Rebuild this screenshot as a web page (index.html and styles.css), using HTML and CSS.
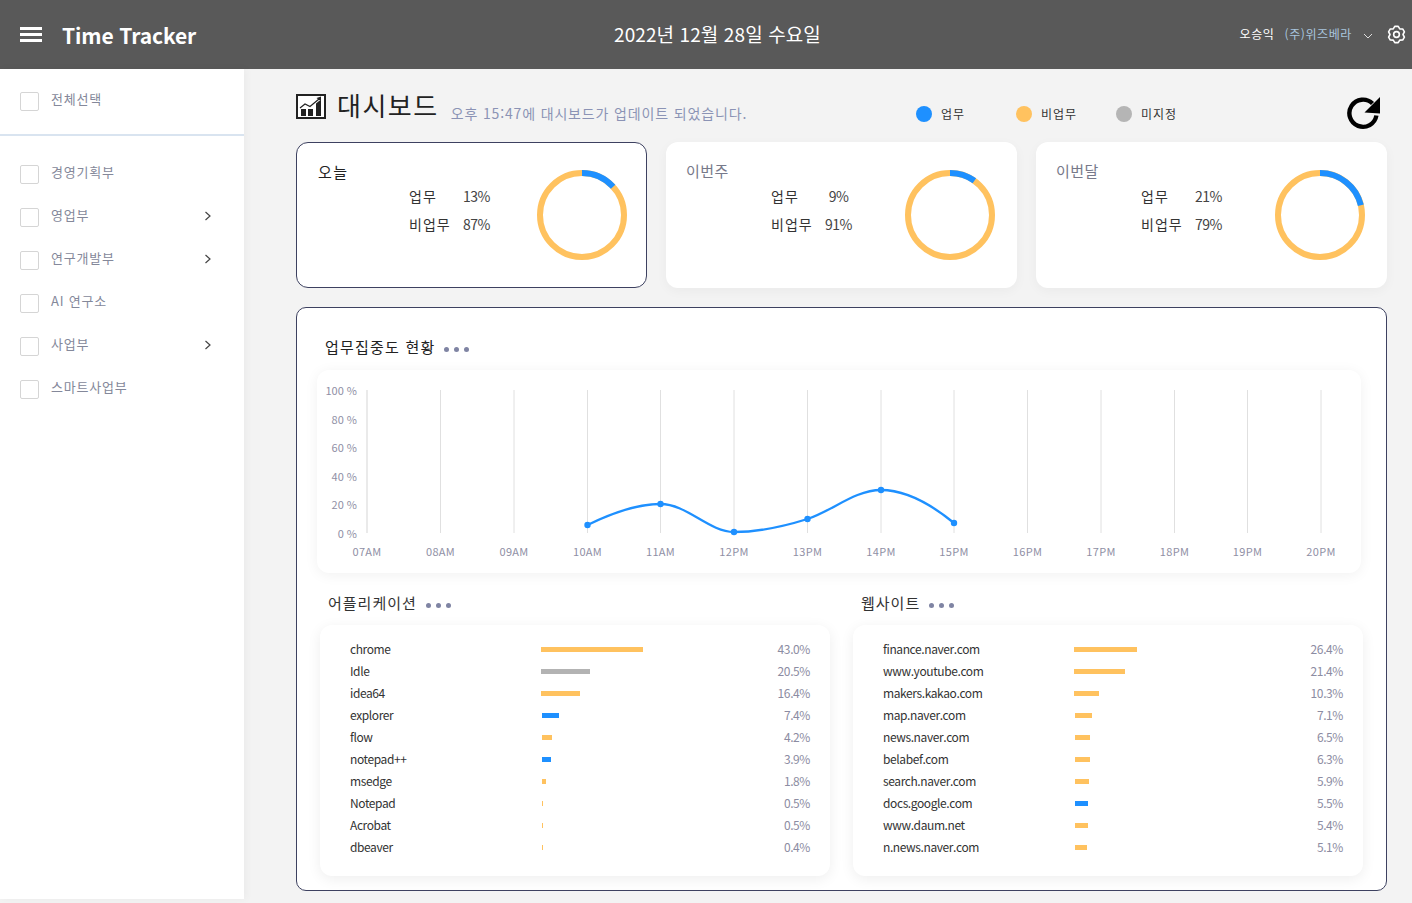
FILE: index.html
```html
<!DOCTYPE html>
<html lang="ko">

<head>
  <meta charset="utf-8">
  <title>Time Tracker</title>
  <link rel="stylesheet" href="styles.css">
</head>

<body>

  <header class="topbar">
    <div class="brand">
      <div class="burger"><span></span><span></span><span></span></div>
      <span class="brand-name">Time Tracker</span>
    </div>
    <div class="today-date">2022년 12월 28일 수요일</div>
    <div class="user">
      <span class="user-name">오승익</span>
      <span class="user-company">(주)위즈베라</span>
      <svg class="user-arrow" width="10" height="6" viewBox="0 0 10 6"><polyline points="1,1 5,5 9,1" /></svg>
      <svg class="gear" width="19" height="19" viewBox="0 0 24 24">
        <circle cx="12" cy="12" r="3.6" />
        <path d="M9.82 1.73L14.18 1.73L16.1 4.9L19.8 4.97L21.99 8.76L20.2 12L21.99 15.24L19.8 19.03L16.1 19.1L14.18 22.27L9.82 22.27L7.9 19.1L4.2 19.03L2.01 15.24L3.8 12L2.01 8.76L4.2 4.97L7.9 4.9Z" />
      </svg>
    </div>
  </header>

  <div class="layout">
    <aside class="sidebar">
      <div class="side-all">
        <span class="check"></span>
        <span class="side-label">전체선택</span>
      </div>
      <ul class="side-list">
        <li class="side-item"><span class="check"></span><span class="side-label">경영기획부</span></li>
        <li class="side-item"><span class="check"></span><span class="side-label">영업부</span>
          <svg class="side-arrow" width="8" height="10" viewBox="0 0 8 10"><polyline points="1.5,1 6,5 1.5,9" /></svg></li>
        <li class="side-item"><span class="check"></span><span class="side-label">연구개발부</span>
          <svg class="side-arrow" width="8" height="10" viewBox="0 0 8 10"><polyline points="1.5,1 6,5 1.5,9" /></svg></li>
        <li class="side-item"><span class="check"></span><span class="side-label">AI 연구소</span></li>
        <li class="side-item"><span class="check"></span><span class="side-label">사업부</span>
          <svg class="side-arrow" width="8" height="10" viewBox="0 0 8 10"><polyline points="1.5,1 6,5 1.5,9" /></svg></li>
        <li class="side-item"><span class="check"></span><span class="side-label">스마트사업부</span></li>
      </ul>
    </aside>

    <main class="main">
      <div class="title-row">
        <div class="title-group">
          <svg class="title-icon" width="30" height="25" viewBox="0 0 30 25">
            <rect x="1" y="1" width="28" height="23" fill="#fff" stroke="#222" stroke-width="2" />
            <rect x="5" y="15" width="5" height="7" fill="#222" />
            <rect x="12" y="15" width="5" height="7" fill="#222" />
            <rect x="20" y="7" width="5" height="15" fill="#222" />
            <polyline points="4,14 9,10 14,12.5 23,5" fill="none" stroke="#fff" stroke-width="3" />
            <polyline points="4,14 9,10 14,12.5 23,5" fill="none" stroke="#222" stroke-width="1.2" />
            <polygon points="25,2.5 25,7.5 20.5,4" fill="#222" />
          </svg>
          <h1 class="page-title">대시보드</h1>
          <span class="updated">오후 15:47에 대시보드가 업데이트 되었습니다.</span>
        </div>
        <div class="legend-item"><span class="dot dot-work"></span>업무</div>
        <div class="legend-item"><span class="dot dot-off"></span>비업무</div>
        <div class="legend-item"><span class="dot dot-none"></span>미지정</div>
        <svg class="refresh" width="34" height="33" viewBox="0 0 34 33">
          <path d="M25.5 6.5A13.6 13.6 0 1 0 29.4 18.5" fill="none" stroke="#000" stroke-width="4.4" />
          <polygon points="33,0 33,16.5 17.5,15.5" fill="#000" />
        </svg>
      </div>

      <section class="cards">
        <div class="card card-active">
          <div class="card-title">오늘</div>
          <div class="stats">
            <span>업무</span><span>13%</span>
            <span>비업무</span><span>87%</span>
          </div>
          <svg class="donut" width="90" height="90" viewBox="0 0 90 90">
            <circle class="ring" cx="45" cy="45" r="42" />
            <circle class="ring-work" cx="45" cy="45" r="42" stroke-dasharray="35 264" transform="rotate(-90 45 45)" />
          </svg>
        </div>
        <div class="card">
          <div class="card-title">이번주</div>
          <div class="stats">
            <span>업무</span><span>9%</span>
            <span>비업무</span><span>91%</span>
          </div>
          <svg class="donut" width="90" height="90" viewBox="0 0 90 90">
            <circle class="ring" cx="45" cy="45" r="42" />
            <circle class="ring-work" cx="45" cy="45" r="42" stroke-dasharray="26 264" transform="rotate(-90 45 45)" />
          </svg>
        </div>
        <div class="card">
          <div class="card-title">이번달</div>
          <div class="stats">
            <span>업무</span><span>21%</span>
            <span>비업무</span><span>79%</span>
          </div>
          <svg class="donut" width="90" height="90" viewBox="0 0 90 90">
            <circle class="ring" cx="45" cy="45" r="42" />
            <circle class="ring-work" cx="45" cy="45" r="42" stroke-dasharray="56 264" transform="rotate(-90 45 45)" />
          </svg>
        </div>
      </section>

      <section class="panel">
        <h2 class="panel-title">업무집중도 현황<span class="more"><i></i><i></i><i></i></span></h2>
        <div class="chart-card">
          <svg width="1044" height="203" viewBox="0 0 1044 203">
            <g class="grid">
              <line class="grid-first" x1="50" y1="20" x2="50" y2="163" />
              <line x1="123.5" y1="20" x2="123.5" y2="163" />
              <line x1="197" y1="20" x2="197" y2="163" />
              <line x1="270.5" y1="20" x2="270.5" y2="163" />
              <line x1="343.5" y1="20" x2="343.5" y2="163" />
              <line x1="417" y1="20" x2="417" y2="163" />
              <line x1="490.5" y1="20" x2="490.5" y2="163" />
              <line x1="564" y1="20" x2="564" y2="163" />
              <line x1="637" y1="20" x2="637" y2="163" />
              <line x1="710.5" y1="20" x2="710.5" y2="163" />
              <line x1="784" y1="20" x2="784" y2="163" />
              <line x1="857.5" y1="20" x2="857.5" y2="163" />
              <line x1="930.5" y1="20" x2="930.5" y2="163" />
              <line x1="1004" y1="20" x2="1004" y2="163" />
            </g>
            <g class="axis-y">
              <text x="40" y="25">100 %</text>
              <text x="40" y="54">80 %</text>
              <text x="40" y="82">60 %</text>
              <text x="40" y="111">40 %</text>
              <text x="40" y="139">20 %</text>
              <text x="40" y="168">0 %</text>
            </g>
            <g class="axis-x">
              <text x="50" y="186">07AM</text>
              <text x="123.5" y="186">08AM</text>
              <text x="197" y="186">09AM</text>
              <text x="270.5" y="186">10AM</text>
              <text x="343.5" y="186">11AM</text>
              <text x="417" y="186">12PM</text>
              <text x="490.5" y="186">13PM</text>
              <text x="564" y="186">14PM</text>
              <text x="637" y="186">15PM</text>
              <text x="710.5" y="186">16PM</text>
              <text x="784" y="186">17PM</text>
              <text x="857.5" y="186">18PM</text>
              <text x="930.5" y="186">19PM</text>
              <text x="1004" y="186">20PM</text>
            </g>
            <path class="line" d="M270.5 155C295 143 320 134 343.5 134C370 134 392 162 417 162C442 162 465 157 490.5 149C515 141 538 120 564 120C590 120 615 135 637 153" />
            <g class="points">
              <circle cx="270.5" cy="155" r="3.2" />
              <circle cx="343.5" cy="134" r="3.2" />
              <circle cx="417" cy="162" r="3.2" />
              <circle cx="490.5" cy="149" r="3.2" />
              <circle cx="564" cy="120" r="3.2" />
              <circle cx="637" cy="153" r="3.2" />
            </g>
          </svg>
        </div>

        <div class="usage">
          <div class="usage-col">
            <h2 class="usage-title">어플리케이션<span class="more"><i></i><i></i><i></i></span></h2>
            <div class="usage-card">
              <div class="row"><span class="row-name">chrome</span><span><span class="bar bar-off" style="width:102px"></span></span><span class="row-pct">43.0%</span></div>
              <div class="row"><span class="row-name">Idle</span><span><span class="bar bar-none" style="width:49px"></span></span><span class="row-pct">20.5%</span></div>
              <div class="row"><span class="row-name">idea64</span><span><span class="bar bar-off" style="width:39px"></span></span><span class="row-pct">16.4%</span></div>
              <div class="row"><span class="row-name">explorer</span><span><span class="bar bar-work bar-small" style="width:17px"></span></span><span class="row-pct">7.4%</span></div>
              <div class="row"><span class="row-name">flow</span><span><span class="bar bar-off bar-small" style="width:10px"></span></span><span class="row-pct">4.2%</span></div>
              <div class="row"><span class="row-name">notepad++</span><span><span class="bar bar-work bar-small" style="width:9px"></span></span><span class="row-pct">3.9%</span></div>
              <div class="row"><span class="row-name">msedge</span><span><span class="bar bar-off bar-small" style="width:4px"></span></span><span class="row-pct">1.8%</span></div>
              <div class="row"><span class="row-name">Notepad</span><span><span class="bar bar-off bar-small" style="width:1px"></span></span><span class="row-pct">0.5%</span></div>
              <div class="row"><span class="row-name">Acrobat</span><span><span class="bar bar-off bar-small" style="width:1px"></span></span><span class="row-pct">0.5%</span></div>
              <div class="row"><span class="row-name">dbeaver</span><span><span class="bar bar-off bar-small" style="width:1px"></span></span><span class="row-pct">0.4%</span></div>
            </div>
          </div>
          <div class="usage-col">
            <h2 class="usage-title">웹사이트<span class="more"><i></i><i></i><i></i></span></h2>
            <div class="usage-card">
              <div class="row"><span class="row-name">finance.naver.com</span><span><span class="bar bar-off" style="width:63px"></span></span><span class="row-pct">26.4%</span></div>
              <div class="row"><span class="row-name">www.youtube.com</span><span><span class="bar bar-off" style="width:51px"></span></span><span class="row-pct">21.4%</span></div>
              <div class="row"><span class="row-name">makers.kakao.com</span><span><span class="bar bar-off" style="width:25px"></span></span><span class="row-pct">10.3%</span></div>
              <div class="row"><span class="row-name">map.naver.com</span><span><span class="bar bar-off bar-small" style="width:17px"></span></span><span class="row-pct">7.1%</span></div>
              <div class="row"><span class="row-name">news.naver.com</span><span><span class="bar bar-off bar-small" style="width:15px"></span></span><span class="row-pct">6.5%</span></div>
              <div class="row"><span class="row-name">belabef.com</span><span><span class="bar bar-off bar-small" style="width:15px"></span></span><span class="row-pct">6.3%</span></div>
              <div class="row"><span class="row-name">search.naver.com</span><span><span class="bar bar-off bar-small" style="width:14px"></span></span><span class="row-pct">5.9%</span></div>
              <div class="row"><span class="row-name">docs.google.com</span><span><span class="bar bar-work bar-small" style="width:13px"></span></span><span class="row-pct">5.5%</span></div>
              <div class="row"><span class="row-name">www.daum.net</span><span><span class="bar bar-off bar-small" style="width:13px"></span></span><span class="row-pct">5.4%</span></div>
              <div class="row"><span class="row-name">n.news.naver.com</span><span><span class="bar bar-off bar-small" style="width:12px"></span></span><span class="row-pct">5.1%</span></div>
            </div>
          </div>
        </div>
      </section>
    </main>
  </div>

</body>

</html>
```

FILE: styles.css
```css
* {
  box-sizing: border-box;
}

html,
body {
  height: 903px;
  overflow: hidden;
}

body {
  margin: 0;
  background-color: #f3f3f3;
  color: #333;
  font-family: "Noto Sans CJK KR", "Noto Sans", sans-serif;
  font-size: 13px;
}

h1,
h2 {
  margin: 0;
  font-weight: 400;
}

/* top bar */
.topbar {
  display: flex;
  align-items: center;
  height: 69px;
  padding-left: 20px;
  background-color: #595959;
  color: #fff;
}

.brand {
  display: flex;
  align-items: center;
  width: 594px;
}

.burger {
  display: flex;
  flex-direction: column;
  gap: 3px;
  width: 22px;
  margin-right: 20px;
}

.burger span {
  height: 3px;
  background-color: #fff;
}

.brand-name {
  font-size: 21px;
  font-weight: 700;
  line-height: 30px;
  letter-spacing: -0.1px;
}

.today-date {
  font-size: 19px;
  line-height: 28px;
  margin-top: -2px;
  letter-spacing: 0.1px;
}

.user {
  display: flex;
  align-items: center;
  margin-left: auto;
  padding-right: 6px;
}

.user-name {
  font-size: 12px;
  letter-spacing: 0.6px;
  margin-right: 10px;
  margin-top: -3px;
}

.user-company {
  font-size: 12px;
  letter-spacing: 0.6px;
  color: #a9c6de;
  margin-right: 11px;
  margin-top: -3px;
}

.user-arrow {
  margin-right: 14px;
  margin-top: 2px;
}

.user-arrow polyline {
  fill: none;
  stroke: #ddd;
  stroke-width: 1;
}

.gear {
  fill: none;
  stroke: #fff;
  stroke-width: 2;
  stroke-linejoin: round;
}

/* left menu */
.layout {
  display: flex;
}

.sidebar {
  width: 244px;
  height: 830px;
  flex-shrink: 0;
  background-color: #fff;
  box-shadow: 2px 0 8px rgba(0, 0, 0, 0.04);
}

.side-all {
  display: flex;
  align-items: flex-start;
  height: 67px;
  padding: 23px 0 0 20px;
  border-bottom: 2px solid #d9e4f0;
}

.side-list {
  list-style: none;
  margin: 0;
  padding: 29px 0 0 20px;
}

.side-item {
  display: flex;
  align-items: flex-start;
  height: 43px;
}

.check {
  width: 19px;
  height: 19px;
  flex-shrink: 0;
  border: 1px solid #d5d5d5;
  border-radius: 2px;
  background-color: #fff;
}

.side-label {
  margin: -3px 0 0 12px;
  color: #84889a;
  font-size: 13px;
  line-height: 20px;
  letter-spacing: 0.8px;
}

.side-arrow {
  margin: 3px 32px 0 auto;
}

.side-arrow polyline {
  fill: none;
  stroke: #444;
  stroke-width: 1.2;
}

/* main area */
.main {
  flex: 1;
  padding: 22px 25px 0 52px;
}

.title-row {
  display: flex;
  align-items: flex-start;
  height: 51px;
}

.title-group {
  display: flex;
  align-items: flex-start;
  width: 620px;
}

.title-icon {
  margin-top: 3px;
  margin-right: 11px;
}

.page-title {
  font-size: 26px;
  line-height: 32px;
  letter-spacing: 1.5px;
  color: #222;
  margin-top: -2px;
  margin-right: 12px;
}

.updated {
  margin-top: 12px;
  font-size: 14px;
  line-height: 21px;
  letter-spacing: 0.85px;
  color: #8b93b5;
}

.legend-item {
  display: flex;
  align-items: center;
  width: 100px;
  height: 16px;
  margin-top: 14px;
  font-size: 12px;
  letter-spacing: 1px;
  color: #333;
}

.dot {
  width: 16px;
  height: 16px;
  margin-top: 2px;
  margin-right: 9px;
  border-radius: 50%;
}

.dot-work {
  background-color: #1e90ff;
}

.dot-off {
  background-color: #ffc25f;
}

.dot-none {
  background-color: #b5b5b5;
}

.refresh {
  margin: 6px 6px 0 auto;
}

/* summary cards */
.cards {
  display: grid;
  grid-template-columns: repeat(3, 351px);
  gap: 19px;
}

.card {
  display: flex;
  align-items: flex-start;
  height: 146px;
  padding: 19px 0 0 20px;
  border-radius: 12px;
  background-color: #fff;
  box-shadow: 0 3px 12px rgba(0, 0, 0, 0.04);
}

.card-title {
  width: 85px;
  font-size: 15px;
  line-height: 20px;
  letter-spacing: 0.4px;
  color: #77798a;
}

.stats {
  display: grid;
  grid-template-columns: 1fr 27px;
  grid-auto-rows: 28px;
  align-items: center;
  width: 81px;
  margin-top: 21px;
  font-size: 14px;
  letter-spacing: 1px;
  color: #333;
}

.stats span:nth-child(even) {
  text-align: center;
  letter-spacing: -0.5px;
  color: #444;
}

.donut {
  margin: 9px 0 0 53px;
}

.ring,
.ring-work {
  fill: none;
  stroke-width: 6;
}

.ring {
  stroke: #ffc25f;
}

.ring-work {
  stroke: #1e90ff;
}

.card-active {
  padding: 19px 0 0 21px;
  border: 1px solid #3d4160;
  box-shadow: none;
}

.card-active .card-title {
  width: 91px;
  letter-spacing: 1.5px;
  color: #222;
}

.card-active .stats {
  margin-top: 20px;
}

.card-active .donut {
  margin: 8px 0 0 47px;
}

/* big panel */
.panel {
  height: 584px;
  margin-top: 19px;
  padding: 28px 0 0;
  border: 1px solid #3d4160;
  border-radius: 10px;
  background-color: #fff;
}

.panel-title {
  display: flex;
  align-items: center;
  height: 22px;
  padding-left: 28px;
  font-size: 15px;
  line-height: 22px;
  letter-spacing: 1.2px;
  color: #222;
}

.more {
  display: flex;
  gap: 5px;
  margin: 5px 0 0 9px;
}

.more i {
  width: 5px;
  height: 5px;
  border-radius: 50%;
  background-color: #7f84a3;
}

.chart-card {
  width: 1044px;
  height: 203px;
  margin: 12px 0 0 20px;
  border-radius: 12px;
  background-color: #fff;
  box-shadow: 0 2px 14px rgba(0, 0, 0, 0.06);
}

.chart-card svg {
  display: block;
}

.grid line {
  stroke: #e0e0e0;
  stroke-width: 1;
}

.grid .grid-first {
  stroke: #eaeaea;
  stroke-width: 2;
}

.axis-y text,
.axis-x text {
  font-size: 11px;
  fill: #8f8fa5;
}

.axis-y text {
  text-anchor: end;
}

.axis-x text {
  letter-spacing: 0.3px;
  text-anchor: middle;
}

.line {
  fill: none;
  stroke: #1e90ff;
  stroke-width: 2.3;
}

.points circle {
  fill: #1e90ff;
}

/* usage lists */
.usage {
  display: grid;
  grid-template-columns: 510px 510px;
  gap: 23px;
  margin: 19px 0 0 23px;
}

.usage-title {
  display: flex;
  align-items: center;
  height: 22px;
  padding-left: 8px;
  font-size: 15px;
  line-height: 22px;
  letter-spacing: 1px;
  color: #333;
}

.usage-card {
  height: 251px;
  margin-top: 11px;
  padding: 13px 20px 0 30px;
  border-radius: 12px;
  background-color: #fff;
  box-shadow: 0 3px 14px rgba(0, 0, 0, 0.07);
}

.row {
  display: grid;
  grid-template-columns: 191px 1fr auto;
  align-items: center;
  height: 22px;
  font-size: 12px;
  color: #333;
}

.row>span {
  display: flex;
  align-items: center;
}

.row .row-name,
.row .row-pct {
  margin-top: -2px;
  letter-spacing: -0.4px;
}

.bar {
  display: block;
  height: 5px;
}

.bar-small {
  margin-left: 1px;
}

.bar-work {
  background-color: #1e90ff;
}

.bar-off {
  background-color: #ffc25f;
}

.bar-none {
  background-color: #b3b3b3;
}

.row-pct {
  color: #8c8ca2;
}
```
